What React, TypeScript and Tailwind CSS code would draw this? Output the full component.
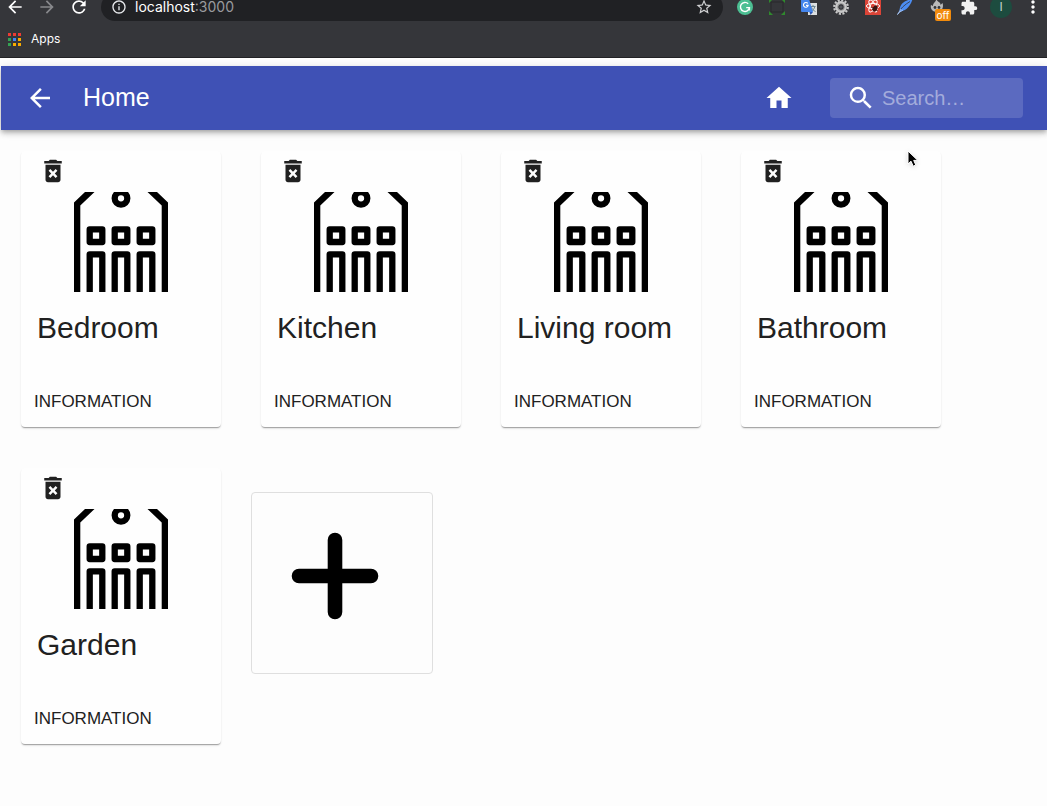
import React from "react";
import {
  MdArrowBack,
  MdArrowForward,
  MdDeleteForever,
  MdExtension,
  MdHome,
  MdInfoOutline,
  MdMoreVert,
  MdRefresh,
  MdSearch,
  MdStarBorder,
} from "react-icons/md";

const rooms = ["Bedroom", "Kitchen", "Living room", "Bathroom", "Garden"];

const appDots = [
  "#ee3b33", "#ee3b33", "#ee3b33",
  "#34a353", "#4285f4", "#f9ab00",
  "#34a353", "#f9ab00", "#f9ab00",
];

function GrammarlyIcon() {
  return (
    <svg viewBox="0 0 16 16" className="size-4">
      <circle cx="8" cy="8" r="8" fill="#4cbf93" />
      <path d="M11.2 4.8A4.5 4.5 0 1 0 12.4 8.6H9.2M12.4 8.6V11.4" fill="none" stroke="#fff" strokeWidth="1.4" />
    </svg>
  );
}

function CaptureIcon() {
  return (
    <svg viewBox="0 0 16 16" className="size-4" fill="none">
      <rect x="2" y="3" width="12" height="10" stroke="#29292b" />
      <path d="M0 4V0L4 0ZM12 0H16V4ZM16 12V16H12ZM4 16H0V12Z" fill="#2f8a2c" />
    </svg>
  );
}

function TranslateIcon() {
  return (
    <svg viewBox="0 0 16 16" className="size-4" fill="none">
      <rect x="7" y="4" width="9" height="12" fill="#dcdfe0" />
      <path d="M9.5 7.5H14.5M12 6V7.5M13.8 7.5C13.3 10 12 11.4 10 12.5M10.6 8.4C11.3 10.4 12.6 11.6 14.5 12.5" stroke="#6e8790" />
      <path d="M0 0H8L12 13H1A1 1 0 0 1 0 12Z" fill="#4485ec" />
      <path d="M8.5 13H12L9.5 16Z" fill="#2b57b5" />
      <path d="M6.8 4.4A2.4 2.4 0 1 0 7.2 6.4H5" stroke="#fff" strokeWidth="1.1" />
    </svg>
  );
}

function GearIcon() {
  return (
    <svg viewBox="0 0 16 16" className="size-4" fill="none">
      <circle cx="8" cy="8" r="6.8" stroke="#c9c9c9" strokeWidth="2.2" strokeDasharray="2.1 1.46" />
      <circle cx="8" cy="8" r="4.4" stroke="#c9c9c9" strokeWidth="3" />
      <circle cx="8" cy="8" r="3.4" stroke="#8a8a8a" strokeWidth="0.8" />
      <circle cx="8" cy="8" r="1.6" fill="#55565a" />
    </svg>
  );
}

function ReactToolsIcon() {
  return (
    <svg viewBox="0 0 16 16" className="size-4" fill="none">
      <rect width="16" height="16" fill="#db4437" />
      <g stroke="#fff">
        <ellipse cx="8" cy="7" rx="6.6" ry="2.6" />
        <ellipse cx="8" cy="7" rx="6.6" ry="2.6" transform="rotate(60 8 7)" />
        <ellipse cx="8" cy="7" rx="6.6" ry="2.6" transform="rotate(120 8 7)" />
      </g>
      <ellipse cx="10" cy="9.5" rx="2.3" ry="3" fill="#3a1512" transform="rotate(35 10 9.5)" />
      <path d="M6 8L13 12M7 11L12 7M9 13L11 6" stroke="#3a1512" strokeWidth="0.8" />
    </svg>
  );
}

function FeatherIcon() {
  return (
    <svg viewBox="0 0 16 16" className="size-4" fill="none">
      <path d="M15.6 0C8 1 3.4 4.6 2.6 10.4L1.6 12.6C8 12.6 13 8.4 15.6 0Z" fill="#4c8df2" />
      <path d="M13 2.5C8 5.5 3 9.5 0.5 15.3" stroke="#35363a" strokeWidth="0.8" />
      <path d="M4 10L0.5 15.5L2.5 13.2L6 11" stroke="#a9c8f8" strokeWidth="0.9" />
    </svg>
  );
}

function FlameIcon() {
  return (
    <span className="relative block size-4">
      <svg viewBox="0 0 16 16" className="size-4">
        <path d="M7.5 0C8 3 12 3 11.5 6L13.5 4C15 8 13 13 8 13C3 13 1 9 2 6L4 7C3.5 4 7 3 7.5 0Z" fill="#b9b9b9" />
        <circle cx="6" cy="8.5" r="1.4" fill="#35363a" />
        <circle cx="10" cy="8.5" r="1.4" fill="#35363a" />
      </svg>
      <span className="absolute top-[10px] left-[6px] flex h-3 w-4 items-center justify-center rounded-xs bg-[#f28b0c] text-[10px] text-white">
        off
      </span>
    </span>
  );
}

const extensions = [
  { name: "Grammar", icon: <GrammarlyIcon /> },
  { name: "Capture", icon: <CaptureIcon /> },
  { name: "Translate", icon: <TranslateIcon /> },
  { name: "Settings", icon: <GearIcon /> },
  { name: "React tools", icon: <ReactToolsIcon /> },
  { name: "Feather", icon: <FeatherIcon /> },
  { name: "Flame", icon: <FlameIcon /> },
  { name: "Extensions", icon: <MdExtension className="size-[18px] text-[#f1f1f1]" /> },
  {
    name: "Profile",
    icon: (
      <span className="flex size-[22px] items-center justify-center rounded-full bg-[#1d4c3f] text-xs text-[#c7d3cf]">
        I
      </span>
    ),
  },
  { name: "Menu", icon: <MdMoreVert className="size-5 text-white" /> },
];

function BrowserBar() {
  return (
    <div className="h-[58px] overflow-hidden border-b border-[#232326] bg-[#35363a] font-[Inter,sans-serif]">
      <div className="-mt-[7px] -mr-0.5 -ml-px flex h-7 items-center">
        <button aria-label="Back" className="flex w-8 justify-center text-white">
          <MdArrowBack className="size-5" />
        </button>
        <button aria-label="Forward" className="flex w-8 justify-center text-[#88898c]">
          <MdArrowForward className="size-5" />
        </button>
        <button aria-label="Reload" className="flex w-8 justify-center text-white">
          <MdRefresh className="size-5" />
        </button>
        <div className="mx-1.5 flex h-7 grow items-center rounded-full bg-[#202124] px-2.5 text-sm leading-[14px]">
          <MdInfoOutline className="mr-2 size-4 text-[#e8eaed]" />
          <span className="text-white">localhost</span>
          <span className="text-[#9a9b9e]">:3000</span>
          <button aria-label="Bookmark" className="ml-auto text-[#d0d1d3]">
            <MdStarBorder className="size-[18px]" />
          </button>
        </div>
        {extensions.map((item) => (
          <button key={item.name} aria-label={item.name} className="flex w-8 justify-center">
            {item.icon}
          </button>
        ))}
      </div>
      <div className="flex h-9 items-center px-2">
        <a href="#apps" className="flex items-center gap-2.5 text-xs text-white">
          <svg viewBox="0 0 13 13" className="size-[13px]">
            {appDots.map((fill, i) => (
              <rect key={i} x={(i % 3) * 5} y={Math.floor(i / 3) * 5} width="3" height="3" fill={fill} />
            ))}
          </svg>
          Apps
        </a>
      </div>
    </div>
  );
}

function AppHeader() {
  return (
    <header className="ml-px flex h-16 items-center bg-[#3f51b5] pr-6 pl-6 text-white shadow-[0_2px_4px_-1px_rgba(0,0,0,0.2),0_4px_5px_0_rgba(0,0,0,0.14),0_1px_10px_0_rgba(0,0,0,0.12)]">
      <button aria-label="Go back">
        <MdArrowBack className="size-[30px]" />
      </button>
      <h1 className="ml-7 pb-0.5 text-[25px] leading-10">Home</h1>
      <a href="#home" aria-label="Home page" className="ml-auto">
        <MdHome className="size-[30px]" />
      </a>
      <label className="ml-9 flex h-10 w-[193px] items-center rounded-sm bg-white/15 pl-4">
        <MdSearch className="size-[30px] shrink-0" />
        <input
          type="search"
          aria-label="Search"
          placeholder="Search…"
          className="ml-1.5 min-w-0 grow bg-transparent text-xl leading-6 outline-none placeholder:text-white/45"
        />
      </label>
    </header>
  );
}

function BuildingPicture() {
  return (
    <svg viewBox="0 0 200 100" className="block h-[100px] w-full" aria-hidden="true">
      <path d="M53 100V10.6L64 0H73.5L59.3 13.4V100ZM147 100V10.6L136 0H126.5L140.7 13.4V100Z" />
      <g fill="none" stroke="#000" strokeWidth="6.3" strokeLinejoin="round">
        <circle cx="100" cy="6.3" r="6.3" />
        {[75, 100, 125].map((x) => (
          <React.Fragment key={x}>
            <rect x={x - 6.3} y="37.4" width="12.6" height="12.6" />
            <path d={`M${x - 6.3} 104V62.3H${x + 6.3}V104`} />
          </React.Fragment>
        ))}
      </g>
    </svg>
  );
}

function RoomCard({ name }: { name: string }) {
  return (
    <li className="mx-5 mt-5 mb-[21px] w-[200px] rounded-sm bg-[#fefefe] pb-px shadow-[0_2px_1px_-1px_rgba(0,0,0,0.2),0_1px_1px_0_rgba(0,0,0,0.14),0_2px_2px_0_rgba(0,0,0,0.08)]">
      <div className="flex h-[41px] items-start pt-[5px] pl-[17px]">
        <button aria-label={`Delete ${name}`}>
          <MdDeleteForever className="size-[30px]" />
        </button>
      </div>
      <BuildingPicture />
      <h2 className="px-4 pt-4 text-3xl leading-10">{name}</h2>
      <button className="mt-[30px] ml-[5px] block px-2 py-2.5 text-[17px] leading-7">INFORMATION</button>
    </li>
  );
}

function Pointer() {
  return (
    <svg viewBox="0 0 12 18" className="pointer-events-none absolute top-[150px] left-[907px] h-[18px] w-3 drop-shadow-sm">
      <path d="M1 1V14L4 11.2L6.2 16.2L8.8 15L6.7 10.4H10.8Z" fill="#000" stroke="#fff" />
    </svg>
  );
}

export default function App() {
  return (
    <div className="relative min-h-screen bg-[#fdfdfd] font-['Liberation_Sans',Arial,sans-serif] text-[#212121]">
      <BrowserBar />
      <div className="bg-white pt-2">
        <AppHeader />
      </div>
      <main className="mt-px ml-px">
        <ul className="flex flex-wrap">
          {rooms.map((name) => (
            <RoomCard key={name} name={name} />
          ))}
          <li className="pt-11 pl-2.5">
            <button aria-label="Add room" className="flex size-[182px] items-start rounded-sm border border-[#dfdfdf] p-[33px]">
              <svg viewBox="0 0 100 100" className="size-[100px]">
                <path d="M50 14V86M14 50H86" stroke="#000" strokeWidth="14.6" strokeLinecap="round" />
              </svg>
            </button>
          </li>
        </ul>
      </main>
      <Pointer />
    </div>
  );
}
